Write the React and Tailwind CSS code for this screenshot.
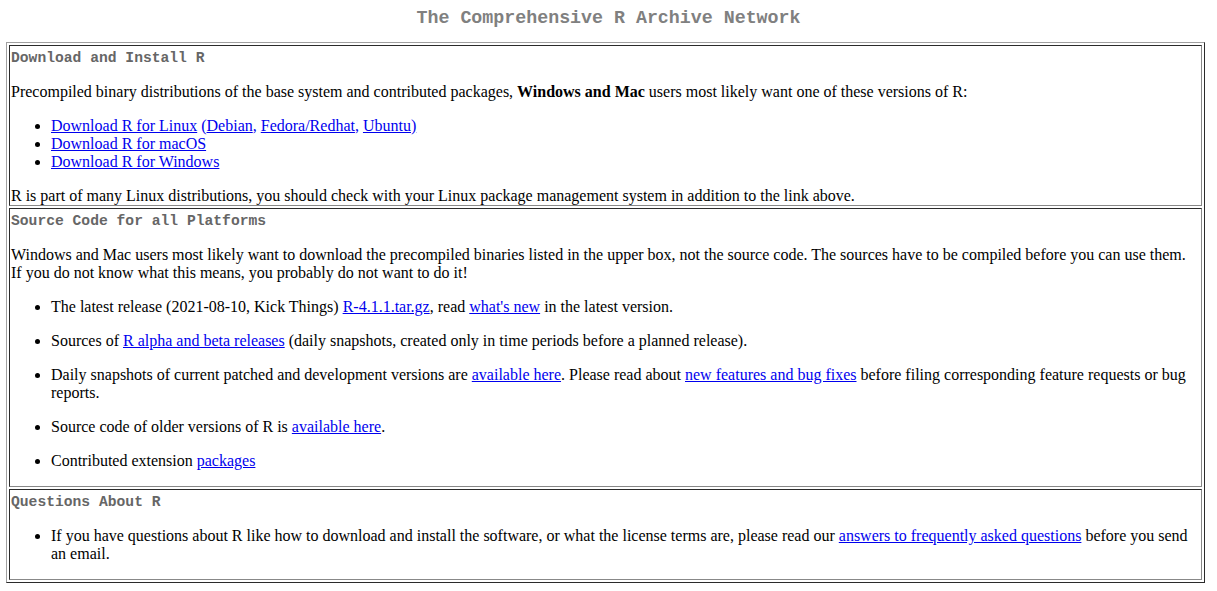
import React from "react";

const A = ({ children }) => (
  <a href="#" className="text-[#0000ee] underline">
    {children}
  </a>
);

const Heading = ({ children }) => (
  <h2 className="h-[20px] leading-[20px] font-bold text-[14.67px] text-[#666666] font-['Liberation_Mono',monospace]">
    {children}
  </h2>
);

const Cell = ({ children, className = "" }) => (
  <div
    className={`border border-t-[#2b2b2b] border-l-[#2b2b2b] border-b-[#888888] border-r-[#888888] px-[1px] pt-[2px] ${className}`}
  >
    {children}
  </div>
);

export default function App() {
  return (
    <div className="min-h-screen bg-white text-black font-['Liberation_Serif',serif] text-[16px] leading-[18px]">
      <h1 className="pt-[7px] h-[42px] leading-[22px] text-center font-bold text-[18.3px] text-[#808080] font-['Liberation_Mono',monospace]">
        The Comprehensive R Archive Network
      </h1>

      <div className="ml-[6px] w-[1199px] border border-t-[#a0a0a0] border-l-[#a0a0a0] border-b-[#2b2b2b] border-r-[#2b2b2b] p-[2px] flex flex-col gap-[2px]">
        <Cell className="pb-0">
          <Heading>Download and Install R</Heading>
          <p className="mt-[15px]">
            Precompiled binary distributions of the base system and contributed packages,{" "}
            <b>Windows and Mac</b> users most likely want one of these versions of R:
          </p>
          <ul className="mt-[16px] pl-[40px] list-disc">
            <li>
              <A>Download R for Linux</A>{" "}
              <span className="text-[#0000ee]">
                (<A>Debian</A>, <A>Fedora/Redhat</A>, <A>Ubuntu)</A>
              </span>
            </li>
            <li>
              <A>Download R for macOS</A>
            </li>
            <li>
              <A>Download R for Windows</A>
            </li>
          </ul>
          <p className="mt-[16px]">
            R is part of many Linux distributions, you should check with your Linux package
            management system in addition to the link above.
          </p>
        </Cell>

        <Cell className="pb-[1px]">
          <Heading>Source Code for all Platforms</Heading>
          <p className="mt-[15px]">
            Windows and Mac users most likely want to download the precompiled binaries listed in
            the upper box, not the source code. The sources have to be compiled before you can use
            them. If you do not know what this means, you probably do not want to do it!
          </p>
          <ul className="mt-[16px] pb-[15px] pl-[40px] list-disc flex flex-col gap-[16px]">
            <li>
              The latest release (2021-08-10, Kick Things) <A>R-4.1.1.tar.gz</A>, read{" "}
              <A>what's new</A> in the latest version.
            </li>
            <li>
              Sources of <A>R alpha and beta releases</A> (daily snapshots, created only in time
              periods before a planned release).
            </li>
            <li>
              Daily snapshots of current patched and development versions are{" "}
              <A>available here</A>. Please read about <A>new features and bug fixes</A> before
              filing corresponding feature requests or bug reports.
            </li>
            <li>
              Source code of older versions of R is <A>available here</A>.
            </li>
            <li>
              Contributed extension <A>packages</A>
            </li>
          </ul>
        </Cell>

        <Cell className="pb-[1px]">
          <Heading>Questions About R</Heading>
          <ul className="mt-[15px] pb-[15px] pl-[40px] list-disc">
            <li>
              If you have questions about R like how to download and install the software, or what
              the license terms are, please read our <A>answers to frequently asked questions</A>{" "}
              before you send an email.
            </li>
          </ul>
        </Cell>
      </div>
    </div>
  );
}
